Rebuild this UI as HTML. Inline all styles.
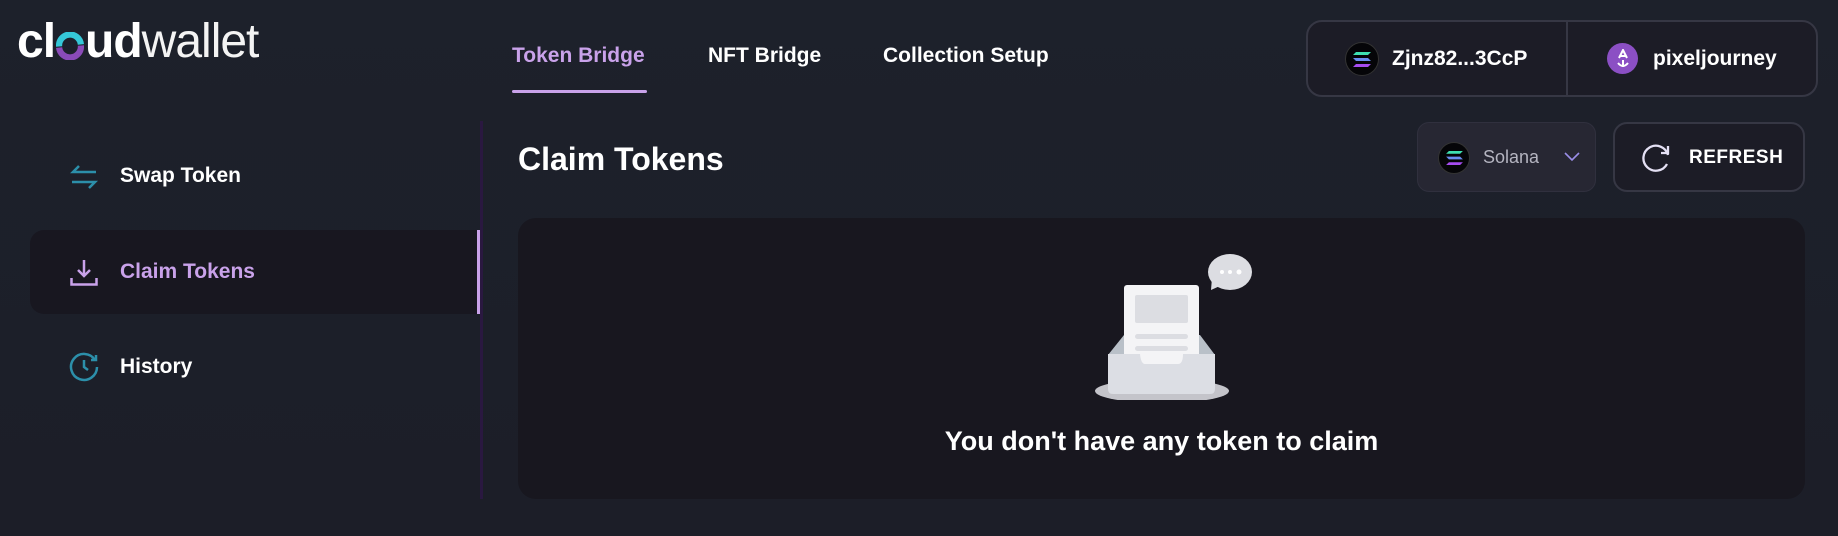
<!DOCTYPE html>
<html><head><meta charset="utf-8"><style>
*{margin:0;padding:0;box-sizing:border-box}
body{width:1838px;height:536px;overflow:hidden;background:linear-gradient(180deg,#1d212b 0%,#1c1e28 100%);font-family:"Liberation Sans",sans-serif;color:#fff;position:relative}
.a{position:absolute}
.logo{left:17px;top:12px;font-size:48px;letter-spacing:-1px;line-height:60px;white-space:nowrap}
.logo b{font-weight:700}
.logo span{font-weight:400;color:#f4f4f4}
.tab{top:44px;font-size:21px;font-weight:700;color:#fff;white-space:nowrap}
.wbox{left:1306px;top:20px;width:512px;height:77px;border:2px solid #363744;border-radius:16px;background:#1c1c26}
.sol{border-radius:50%;background:#050508;border:1px solid #333;display:flex;align-items:center;justify-content:center}
.nav{font-size:21px;font-weight:700;white-space:nowrap}
</style></head><body>
<div class="a logo"><b>cl<span style="display:inline-block;width:28px;height:28px;position:relative;top:3px;margin:0 1px"><svg width="28" height="28" viewBox="0 0 27 27"><path d="M3 14 A10.5 10.5 0 0 1 24 12" stroke="#35c8d8" stroke-width="6" fill="none"/><path d="M24 13 A10.5 10.5 0 0 1 3 15" stroke="#8a4bb8" stroke-width="6" fill="none"/><path d="M9 9 L17 18" stroke="#1d212b" stroke-width="3"/></svg></span>ud</b><span>wallet</span></div>

<div class="a tab" style="left:512px;color:#c9a2ea">Token Bridge</div>
<div class="a" style="left:512px;top:90px;width:135px;height:3px;background:#c9a2ea;border-radius:2px"></div>
<div class="a tab" style="left:708px">NFT Bridge</div>
<div class="a tab" style="left:883px">Collection Setup</div>

<div class="a wbox"></div>
<div class="a" style="left:1566px;top:22px;width:2px;height:73px;background:#363744"></div>
<div class="a sol" style="left:1345px;top:42px;width:34px;height:34px"><svg width="18" height="15" viewBox="0 0 18 15"><path d="M3 0H18L15 3H0Z" fill="#3ee0b0"/><path d="M0 6H15L18 9H3Z" fill="#6a8df0"/><path d="M3 12H18L15 15H0Z" fill="#a64cf0"/></svg></div>
<div class="a" style="left:1392px;top:47px;font-size:21px;font-weight:700">Zjnz82...3CcP</div>
<div class="a" style="left:1607px;top:43px;width:31px;height:31px;border-radius:50%;background:#8b4fc4;display:flex;align-items:center;justify-content:center"><svg width="16" height="20" viewBox="0 0 16 20"><path d="M4 9L8 1L12 9M5 7H11M8 11V18M3 14Q8 20 13 14" stroke="#fff" stroke-width="2" fill="none"/></svg></div>
<div class="a" style="left:1653px;top:47px;font-size:21px;font-weight:700">pixeljourney</div>

<!-- sidebar -->
<div class="a" style="left:480px;top:121px;width:3px;height:378px;background:#2a1840"></div>
<svg class="a" style="left:70px;top:163px" width="28" height="28" viewBox="0 0 28 28"><path d="M26 9H3L9 3M2 19H25L19 25" stroke="#2c8faa" stroke-width="2.5" fill="none"/></svg>
<div class="a nav" style="left:120px;top:164px">Swap Token</div>
<div class="a" style="left:30px;top:230px;width:450px;height:84px;background:#181720;border-radius:14px 0 0 14px"></div>
<div class="a" style="left:477px;top:230px;width:3px;height:84px;background:#c9a2ea"></div>
<svg class="a" style="left:70px;top:259px" width="28" height="27" viewBox="0 0 28 27"><path d="M14 1V17M8 11L14 17L20 11M1.5 19V25.5H26.5V19" stroke="#c9a2ea" stroke-width="2.5" fill="none"/></svg>
<div class="a nav" style="left:120px;top:260px;color:#c9a2ea">Claim Tokens</div>
<svg class="a" style="left:69px;top:352px" width="30" height="30" viewBox="0 0 30 30"><path d="M26 8A13 13 0 1 0 28 15" stroke="#2c8faa" stroke-width="2.5" fill="none"/><path d="M22 8H27V3" stroke="#2c8faa" stroke-width="2.5" fill="none"/><path d="M15 8V15L19 18" stroke="#2c8faa" stroke-width="2.5" fill="none"/></svg>
<div class="a nav" style="left:120px;top:355px">History</div>

<!-- main -->
<div class="a" style="left:518px;top:141px;font-size:32px;font-weight:700">Claim Tokens</div>
<div class="a" style="left:1417px;top:122px;width:179px;height:70px;background:#272733;border:1px solid #30303e;border-radius:12px"></div>
<div class="a sol" style="left:1438px;top:142px;width:32px;height:32px"><svg width="17" height="14" viewBox="0 0 18 15"><path d="M3 0H18L15 3H0Z" fill="#3ee0b0"/><path d="M0 6H15L18 9H3Z" fill="#6a8df0"/><path d="M3 12H18L15 15H0Z" fill="#a64cf0"/></svg></div>
<div class="a" style="left:1483px;top:147px;font-size:18px;color:#b4b4c0">Solana</div>
<svg class="a" style="left:1564px;top:152px" width="16" height="10" viewBox="0 0 16 10"><path d="M1 1L8 8L15 1" stroke="#9a8ee8" stroke-width="1.6" fill="none"/></svg>
<div class="a" style="left:1613px;top:122px;width:192px;height:70px;border:2px solid #363744;border-radius:14px;background:#1c1c26"></div>
<svg class="a" style="left:1640px;top:142px" width="32" height="32" viewBox="0 0 32 32"><path d="M28 13A12.5 12.5 0 1 0 27 22" stroke="#e4e0f4" stroke-width="2.3" fill="none"/><path d="M21 11H28V4" stroke="#e4e0f4" stroke-width="2.3" fill="none"/></svg>
<div class="a" style="left:1689px;top:147px;font-size:19px;font-weight:700;letter-spacing:0.5px">REFRESH</div>

<div class="a" style="left:518px;top:218px;width:1287px;height:281px;background:#18171f;border-radius:18px"></div>
<svg class="a" style="left:1090px;top:250px" width="170" height="150" viewBox="1090 250 170 150">
<ellipse cx="1162" cy="391" rx="67" ry="12" fill="#c4c4ca"/>
<path d="M1108 355L1124 335H1200L1215 355Z" fill="#b9c0c8"/>
<rect x="1124" y="285" width="75" height="82" rx="3" fill="#f4f4f6"/>
<rect x="1135" y="295" width="53" height="28" rx="2" fill="#dcdde2"/>
<rect x="1135" y="334" width="53" height="5" rx="2.5" fill="#dcdde2"/>
<rect x="1135" y="346" width="53" height="5" rx="2.5" fill="#dcdde2"/>
<path d="M1108 354H1140Q1141 364 1145 364H1178Q1183 364 1183 354H1215V389Q1215 394 1210 394H1113Q1108 394 1108 389Z" fill="#dcdee4"/>
<ellipse cx="1230" cy="272" rx="22" ry="18" fill="#dcdde2"/>
<path d="M1212 278L1211 290L1222 285Z" fill="#dcdde2"/>
<circle cx="1222" cy="272" r="2" fill="#fff"/><circle cx="1230" cy="272" r="2" fill="#fff"/><circle cx="1239" cy="272" r="2.5" fill="#fff"/>
</svg>
<div class="a" style="left:518px;width:1287px;top:426px;text-align:center;font-size:27px;font-weight:700">You don't have any token to claim</div>
</body></html>
